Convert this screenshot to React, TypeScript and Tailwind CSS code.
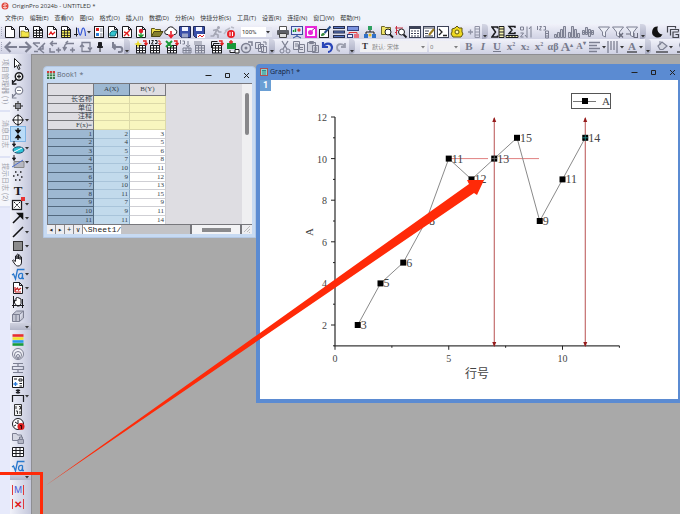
import type { ReactNode } from "react";

const GREY = "#7d8092";
const INK = "#1b1b1f";

const menus = [
  "文件(F)", "编辑(E)", "查看(V)", "图(G)", "格式(O)", "插入(I)", "数据(D)",
  "分析(A)", "快捷分析(S)", "工具(T)", "设置(R)", "连接(N)", "窗口(W)", "帮助(H)",
];

// worksheet data, A is plotted and B is used for the point labels
const rows = [
  [2, 3], [4, 5], [5, 6], [7, 8], [10, 11], [9, 12],
  [10, 13], [11, 15], [7, 9], [9, 11], [11, 14],
];

const page = <path d="M2.5 1.5h6l3 3v8h-9z M8.5 1.5v3h3" fill="#fff" stroke={INK} />;

function grid(fill: string, stroke: string) {
  return (
    <>
      <rect x="2.5" y="5.5" width="9" height="7" fill={fill} />
      <path d="M2 5.5h10M2 8h10M2 10.5h10M2 13h10M2.5 5v8M5.5 5v8M8.5 5v8M11.5 5v8" stroke={stroke} />
    </>
  );
}

const icons: Record<string, ReactNode> = {
  // standard bar
  "New project": page,
  "New folder": <>{page}<path d="M4 6h3l1 1h4v5H4z" fill="#f4e64a" stroke="#8a8020" strokeWidth=".7" /></>,
  "New workbook": <>{page}<path d="M2.5 5.5h9M2.5 8h9M2.5 10.5h9M5.5 4v8M8.5 4v8" stroke={INK} /></>,
  "New graph": <>{page}<path d="M4 10l2-3 1.500 2.500L10 7" fill="none" stroke="#e02020" strokeWidth="1.300" /></>,
  "New matrix": <>{page}<rect x="3" y="5" width="8" height="7" fill="#f4ec5a" /><path d="M2.500 5.500h9M2.500 8h9M2.500 10.500h9M5.500 4v8M8.500 4v8" stroke={INK} strokeWidth=".8" /></>,
  "New function plot": <><path d="M3.500 2.500v9M1 9.500h4" stroke={INK} /><path d="M5 3c2 12 3 6 4 2s3-2 3.500 6" fill="none" stroke="#3558d8" strokeWidth="1.200" /></>,
  "New report": <><rect x="2.500" y="1.500" width="9" height="11" fill="#fff" stroke={INK} /><rect x="4" y="3" width="3" height="3" fill="#e02020" /><rect x="4" y="8" width="3" height="3" fill="#2e7fd8" /><path d="M8 4h2.500M8 6h2.500M8 9h2.500M8 11h2.500" stroke={GREY} /></>,
  "New layout": <>{page}<path d="M4 8l2-2h5l-2 5H4z" fill="#35c5d0" stroke="#146a78" /></>,
  "New notes": <>{page}<path d="M4 11l6-6M4 7l3 1 2 3" stroke="#e02020" strokeWidth="1.400" fill="none" /></>,
  "New image": <>{page}<circle cx="7" cy="6" r="2.200" fill="#e02030" /><path d="M7 8v4M4.500 9.500L7 12l2.500-2.500" stroke="#18902c" strokeWidth="1.300" fill="none" /></>,
  Open: <><path d="M1.500 11.500v-8h3l1 1h5v2" fill="#efe04c" stroke="#5e5818" /><path d="M1.500 11.500l2.500-5h9l-3 5z" fill="#85802c" stroke="#4a4616" /></>,
  "Open from cloud": <><path d="M4 9.500H3a2.300 2.300 0 010-4.600 4 4 0 017.600-.6 2.700 2.700 0 01.4 5.200h-1" fill="#fff" stroke={INK} /><path d="M7 6v6M4.500 9.500L7 12.500l2.500-3" stroke="#e8202c" strokeWidth="1.600" fill="none" /></>,
  Save: <><path d="M1.500 1.500h11v11h-9l-2-2z" fill="#3a4fa8" stroke="#1e2858" /><rect x="4" y="2" width="6" height="4" fill="#f3f5ff" /><rect x="4" y="8.500" width="6" height="4" fill="#9aa4c8" /></>,
  "Save template": <><path d="M1.500 1.500h11v11h-9l-2-2z" fill="#3a4fa8" stroke="#1e2858" /><rect x="4" y="2" width="6" height="4" fill="#f3f5ff" /><path d="M5 9h8v4H5z" fill="#fff" /><path d="M6 12l2-2 2 2 2-2" stroke="#e02020" fill="none" /></>,
  Run: <><circle cx="9.500" cy="2.500" r="1.500" fill="#a5a7b5" /><path d="M4 5.500l4-1-2 4 3 1.500v3M6 8.500L4.500 11H1.500M8.500 5l1.500 2h2.500" stroke="#a5a7b5" strokeWidth="1.700" fill="none" /></>,
  Pause: <><path d="M2 6l5-3M1 9l3-4M8 2l3 1" stroke="#b9bbc6" strokeWidth="1.500" /><circle cx="8" cy="9" r="4" fill="#e8222a" /><path d="M7 7v4M9.500 7v4" stroke="#fff" /></>,
  Print: <><path d="M3.500 5V1.500h7V5" fill="#fff" stroke="#555" /><rect x="1" y="5" width="12" height="5" rx="1" fill="#5d5f66" /><path d="M3.500 8.500h7v4h-7z" fill="#ddd" stroke="#444" /></>,
  "Slide show": <><rect x="1.500" y="1.500" width="11" height="8" fill="#dfe9ff" stroke="#3c4e9c" /><path d="M3.500 7V5M5.500 7V3.500" stroke="#18902c" strokeWidth="1.400" /><circle cx="9" cy="5" r="1.700" fill="#e04040" /><path d="M7 9.500v2M3 13l4-2 4 2" stroke="#30509c" fill="none" /></>,
  "Active window": <><rect x="1" y="1" width="12" height="12" fill="#e828d8" /><rect x="3" y="3" width="8" height="8" fill="#fff" /><circle cx="6.500" cy="7.500" r="2.500" fill="#e828d8" /><path d="M8 5.500l3-2.500" stroke="#a010a0" /></>,
  Brush: <><rect x="1.500" y="4.500" width="9" height="8" fill="#fff" stroke={INK} /><path d="M12.500 1.500L6.500 8" stroke="#26508c" strokeWidth="2" /><path d="M3 11c0-3 2-3.500 3.500-2.500S5 11.500 3 11z" fill="#3a8c40" /></>,
  Rows: <><path d="M1 2.500h12M1 7h12M1 11.500h12" stroke="#29304e" strokeWidth="3" /><path d="M2 2.500h10M2 7h10M2 11.500h10" stroke="#5a78c8" /></>,
  Flow: <><rect x="1.500" y="1.500" width="11" height="4" fill="#7a92e0" stroke="#35427c" /><path d="M3 7.500h8M3 7.500v2M11 7.500v2" stroke="#e03838" /><rect x="1.500" y="9.500" width="5" height="3" fill="#eef" stroke="#35427c" /><rect x="8" y="9" width="5" height="4" fill="#e87080" /></>,
  Tree: <><path d="M7 4v3M3 10V7h8v3" stroke={INK} fill="none" /><rect x="5" y="1" width="4" height="4" fill="#2ea060" /><rect x="1" y="9" width="4" height="4" fill="#3070c8" /><rect x="9" y="9" width="4" height="4" fill="#3070c8" /><circle cx="7" cy="10" r="1.500" fill="#e8c020" /></>,
  "Find in folder": <><path d="M1.500 9.500v-8h3l1 1h5v7z" fill="#f0e468" stroke="#6c6628" /><circle cx="8" cy="7" r="3" fill="#fff" stroke={INK} /><path d="M10 9.500l3 3" stroke={INK} strokeWidth="1.800" /></>,
  "Find in graph": <><path d="M2.500 1v9M1 3h8M1 8l3-3" stroke="#c83040" /><circle cx="7.500" cy="7" r="3" fill="#fff" stroke={INK} /><path d="M9.500 9.500l3 3" stroke={INK} strokeWidth="1.800" /></>,
  Table: <><rect x="1.500" y="1.500" width="11" height="11" fill="#fff" stroke="#3c4257" /><path d="M2 3h10" stroke="#3c4257" strokeWidth="2" /><path d="M3 6h8M3 8.500h8M3 11h8" stroke="#3c4257" strokeDasharray="2 1" /></>,
  "Edit table": <><rect x="1.500" y="1.500" width="11" height="11" fill="#fff" stroke="#3c4257" /><path d="M2 3h10M3 6h4M3 8.500h3M3 11h8" stroke="#3c4257" /><path d="M12 4L7 10" stroke="#9c7c20" strokeWidth="2" /></>,
  Console: <><rect x="1.500" y="1.500" width="11" height="11" fill="#fff" stroke="#3c4257" /><path d="M3 4l3 3-3 3M7 10.500h4" stroke="#222" strokeWidth="1.300" fill="none" /></>,
  Apps: <><path d="M7 1l2 2h3v4l1 2-2 3H3L1 9l1-2V4l3-1z" fill="#eed820" stroke="#5c5410" /><circle cx="7" cy="7" r="2" fill="#fff8b0" stroke="#5c5410" /></>,
  "Add column": <><path d="M1 7h5M3.500 4.500v5" stroke="#8f92a4" strokeWidth="1.300" /><path d="M8 1.500h4.500v11H8zM8 4h4.500M8 7h4.500M8 10h4.500" stroke="#8f92a4" fill="none" /></>,
  "Column statistics": <><path d="M6.500 3.500V2H1l3.500 5L1 12h5.500v-1.500" stroke={INK} strokeWidth="1.500" fill="none" /><path d="M8 1.500h5v11H8zM8 4h5M8 7h5M8 10h5" stroke={INK} fill="#f4f0b0" /></>,
  "Row statistics": <><path d="M10 3V1.500H4L7 5 4 8.500h6V7" stroke={INK} strokeWidth="1.400" fill="none" /><path d="M1 10.500h12v2H1zM4 10v3M7 10v3M10 10v3" stroke={INK} fill="#f4f0b0" /></>,
  Sort: <path d="M1.500 2h3v3h-3zM1.500 8h3L1.500 12h3M8 1.500v11M6 10l2 2.500M12 12.500v-11M10 4l2-2.500" stroke={GREY} fill="none" />,
  "Set values": <path d="M1.500 1v4M3.500 1.500h2L3.500 5h2M7.500 1.500h2v3.500h-2M9.500 6v7h3V6zM9.500 8.500h3M9.500 11h3" stroke={GREY} fill="none" />,
  "Bars ascending": <path d="M1.500 9.500h2v3h-2zM4.500 7.500h2v5h-2zM7.500 4.500h2v8h-2zM10.500 1.500h2v11h-2z" stroke={GREY} fill="#c9cbd6" />,
  Bars: <path d="M1.500 7.500h2v5h-2zM4.500 1.500h2v11h-2zM7.500 4.500h2v8h-2zM10.500 8.500h2v4h-2z" stroke={GREY} fill="#c9cbd6" />,
  "Bars centred": <path d="M1.500 5.500h2v4h-2zM4.500 2.500h2v7h-2zM7.500 4.500h2v7h-2zM10.500 5.500h2v4h-2zM1 7.500h12" stroke={GREY} fill="#c9cbd6" />,
  Filter: <path d="M1.500 2h11L8.500 7v5l-3-1.500V7z" stroke={GREY} fill="#eceef6" />,
  "Clear filter": <><path d="M1.500 2h11L8.500 7v5l-3-1.500V7z" stroke={GREY} fill="#eceef6" /><path d="M8 8l4 4.500M12 8l-4 4.500" stroke="#6a6c7c" strokeWidth="1.300" /></>,
  "Reapply filter": <><path d="M1.500 2h11L8.500 7v5l-3-1.500V7z" stroke={GREY} fill="#eceef6" /><path d="M1 9h4M9 8v4.500h4M12.500 12V8" stroke="#6a6c7c" fill="none" /></>,
  Theme: <path d="M9 1.500a5.500 5.500 0 104.500 8A5.500 5.500 0 019 1.500z" fill="#111" />,
  Layers: <path d="M1.500 7.500v-6h8v2M4.500 10.500v-6h8v2M12.500 7H7v5.500h5.500v-3H9.500" stroke="#44464f" fill="none" strokeWidth="1.200" />,
  // edit bar
  Back: <path d="M6.500 2L1.500 7l5 5M2 7h11" stroke={GREY} strokeWidth="2.200" fill="none" />,
  Forward: <path d="M7.500 2l5 5-5 5M12 7H1" stroke={GREY} strokeWidth="2.200" fill="none" />,
  Recalculate: <path d="M1 3h7M1 3l5 4M13 3L6 10M2 11.500h4M7 9l5 4M11 5v4h-4" stroke={GREY} strokeWidth="1.500" fill="none" />,
  "Step back": <path d="M5 1L2.500 3.500 5 6M3 3.500h6M2 8v4h5M8 10h5M10.500 7.500v5" stroke={GREY} strokeWidth="1.500" fill="none" />,
  "Step forward": <path d="M12 3.500H6A3.500 3.500 0 002.500 7v2M4.500 7l-2 3-1.500-3M8 10h5M10.500 7.500v5M6 1L3.500 3.500" stroke={GREY} strokeWidth="1.500" fill="none" />,
  Refresh: <path d="M3 5V2.500h8V9M11 9v2.500H3V5M1 7l2-2.500L5 7M9 7.500l2 2.500 2-2.500" stroke={GREY} strokeWidth="1.300" fill="#e2e3ee" />,
  Pin: <path d="M5.500 2.500h3v4h1v1h-5v-1h1zM7 8v4" stroke={INK} fill={INK} />,
  Return: <path d="M3 2v5h7c3 0 3 5 0 5H8M5.500 4.500L3 7l2.500 2.500" stroke={GREY} strokeWidth="2" fill="none" />,
  "Book star": <>{grid("#fff", INK)}<path d="M4 0l1 3 3 1-3 1-1 3-1-3-3-1 3-1z" fill="#ecdc28" /><path d="M9 1h3v3M10.500 3L12 5l1.500-2" stroke="#e02020" strokeWidth="1.300" fill="none" /></>,
  "Import numbers": <>{grid("#fff", INK)}<path d="M1.500 0v4M3.500 .5h2L3.500 4h2M7 .5h2v3H7" stroke={INK} fill="none" /><path d="M10 1h2v3M10.500 3L12 5l1.500-2" stroke="#e02020" fill="none" /></>,
  "Import sheet": <>{grid("#fff", INK)}<path d="M1 1l6 6M7 1L1 7" stroke="#1c9a38" strokeWidth="2" /><path d="M9 1h3v3M10.500 3L12 5l1.500-2" stroke="#e02020" strokeWidth="1.300" fill="none" /></>,
  "Import again": <path d="M1.500 0v4M3.500 1h2v3h-2M9 1v6M7 5l2 2.500L11 5M4 8h8v5H4zM4 10.500h8M7 8v5M10 8v5" stroke={GREY} fill="none" />,
  "Clone import": <>{grid("#d9dae4", GREY)}<path d="M1 1h8v4H1z" fill="#b6b8c6" /></>,
  Batch: <><path d="M1.500 8V1.500h6M3.500 10V3.500h6" stroke={INK} fill="none" />{grid("#fff", INK)}<path d="M9 1h3v3M10.500 3L12 5l1.500-2" stroke="#e02020" strokeWidth="1.300" fill="none" /></>,
  "Connect data": <><rect x="1" y="3" width="9" height="6" fill="#18983a" /><path d="M5 0v4M3 2h4" stroke="#e02020" strokeWidth="1.300" /><path d="M4 10v2.500h5M9 9.500h4v3.500H9z" stroke={INK} fill="#fff" /></>,
  Recapture: <><circle cx="6" cy="8" r="4.500" stroke={GREY} fill="#d8dae6" strokeWidth="1.500" /><circle cx="6" cy="8" r="1.500" fill={GREY} /><path d="M8 2h4v4" stroke={GREY} fill="none" strokeWidth="1.500" /></>,
  Duplicate: <path d="M1.500 2.500h5v6h-5zM4.500 4.500h5v7h-5zM9 2h3v3M7.500 6.500h5v6h-5z" stroke={GREY} fill="#dfe0ea" />,
  Cut: <><path d="M4 1l5 8M10 1L5 9" stroke={GREY} strokeWidth="1.300" /><circle cx="4" cy="11" r="2" stroke={GREY} fill="none" /><circle cx="10" cy="11" r="2" stroke={GREY} fill="none" /></>,
  Copy: <path d="M1.500 1.500h6v8h-6zM6.500 4.500h6v8h-6zM3 4h3M3 6h3M8 7.500h3M8 9.500h3" stroke={GREY} fill="#dfe0ea" />,
  Paste: <path d="M1.500 2.500h8v9h-8zM3.500 1.500h4v2h-4zM6.500 5.500h6v7h-6zM8 8h3M8 10h3" stroke={GREY} fill="#d0d2de" />,
  Undo: <path d="M3 2v5h5M3 7c2-4 8-5 9 0 0 3-2 5-4 5" stroke="#2a46b8" strokeWidth="2.200" fill="none" />,
  Redo: <path d="M11 3v4H7M11 7C9 3 3 3 3 7.500c0 2 1 3.500 3 3.500" stroke="#9c9fae" strokeWidth="1.800" fill="none" />,
  Align: <path d="M1 2.500h11M1 5.500h8M1 8.500h11M1 11.500h8" stroke={GREY} strokeWidth="1.300" />,
  Spacing: <path d="M2 1v12M5 1v9M8 1v9M11 1v12" stroke={GREY} strokeWidth="1.300" />,
  Fill: <><path d="M3 6l4-4 5 4-4 3.500H5z" stroke={GREY} fill="#d6d8e2" strokeWidth="1.200" /><path d="M5 5V1" stroke={GREY} /><rect x="1" y="11" width="12" height="2" fill="#6f7078" /></>,
  "Line colour": <><circle cx="7" cy="5" r="3.500" stroke={GREY} fill="none" /><rect x="1" y="11" width="12" height="2" fill="#6f7078" /></>,
  // tools bar
  Pointer: <path d="M3.500 1.500v9l2.200-2 1.800 4 1.500-.7-1.800-3.800h3z" fill="#fff" stroke={INK} />,
  "Zoom in": <><circle cx="8" cy="5.500" r="3.700" stroke={INK} strokeWidth="1.500" fill="#fff" /><path d="M6 5.500h4M8 3.500v4M5.500 8L2 11.500M1.500 9v4h4" stroke={INK} strokeWidth="1.300" fill="none" /></>,
  "Zoom out": <><circle cx="8" cy="5.500" r="3.700" stroke={GREY} strokeWidth="1.200" fill="#fff" /><path d="M6 5.500h4M5.500 8L2 11.500M1.500 9v4h4" stroke={GREY} strokeWidth="1.200" fill="none" /></>,
  Reader: <><path d="M7 2v10M2 7h10" stroke={INK} /><rect x="4.500" y="4.500" width="5" height="5" fill="#8d8f98" stroke="#444" /></>,
  Target: <><circle cx="7" cy="7" r="4.500" stroke={INK} fill="#fff" /><path d="M7 1v12M1 7h12" stroke={INK} /></>,
  "Data cursor": <path d="M7 1v3M5 3.500h4L7 6zM7 13v-3M5 10.500h4L7 8z" fill="#111" stroke="#111" strokeWidth="1.300" />,
  "Select data": <><path d="M3 0v4M1.500 3L3 5.500 4.500 3z" stroke={INK} fill={INK} /><ellipse cx="7.500" cy="9" rx="5.500" ry="3.200" fill="#2cc4d8" stroke="#1c4a6c" /><path d="M3 11l8-4" stroke="#fff" /></>,
  "Mask data": <><path d="M3 0v4M1.500 3L3 5.500 4.500 3z" stroke={INK} fill={INK} /><path d="M3 6.500h10v6H3z" fill="#b7b8c2" stroke="#888" /><path d="M1 12l11-7" stroke="#4a6cd0" /></>,
  "Draw data": <path d="M4 3h1.500M9 3h1.500M2 7h1.500M10 8h1.500M4 11h1.500M8 11h1.500M6 6h1.500" stroke={INK} strokeWidth="1.300" />,
  Rescale: <><rect x="1.500" y="3.500" width="9" height="9" fill="#fff" stroke={INK} strokeWidth="1.300" /><path d="M3 5l6 6M9 5l-6 6" stroke={INK} strokeDasharray="2 1" /><rect x="10" y="0" width="4" height="4" fill="#e83030" /></>,
  Arrow: <path d="M2 12L10 4M7 2.500h4.500V7z" stroke="#111" strokeWidth="1.600" fill="#111" />,
  Line: <path d="M2 12L12 2" stroke="#111" strokeWidth="1.600" />,
  Rectangle: <rect x="2.500" y="2.500" width="9" height="9" fill="#8c8c8c" stroke="#333" />,
  Pan: <path d="M4.500 8V3a1 1 0 011.500 0v3-4.500a1 1 0 011.500 0V6 2.500a1 1 0 011.500 0V6.500v-2.500a1 1 0 011.500 0V9c0 3-1.500 4-3.500 4S4 11.500 1.500 7.500c.5-1 2-.5 3 1.500" fill="#fff" stroke={INK} />,
  Equation: <path d="M1 8l1.500-1L4.500 12 6.500 2.500h7M11.500 6.500c-5-1.500-5 6-1.500 5 1 0 1.500-2 1.500-5v5h1.500" stroke="#2878cc" strokeWidth="1.300" fill="none" />,
  "Insert graph": <>{page}<path d="M4 11V6M4 11h6M4.500 9l2-2 1 2L10 7" fill="none" stroke="#c82020" strokeWidth="1.200" /></>,
  "Pan page": <><path d="M3.500 8V5l1.500 1V3l1.500-.5L8 3l2 1v4.500L8.500 11H6z" fill="#fff" stroke={INK} /><path d="M1 10.500h12M2.500 1v12M11.500 4v9" stroke={INK} /></>,
  Rotate: <path d="M1.500 5.500h7v7h-7zM1.500 5.500l4-3.500h7l-4 3.500M12.500 2v7l-4 3.500M5 5.500v7" stroke={GREY} fill="#c4c6d2" />,
  "Colour scale": <><path d="M1.500 2.500h11" stroke="#e83030" strokeWidth="2.600" /><path d="M1.500 5.500h11" stroke="#f4e42c" strokeWidth="2.600" /><path d="M1.500 8.500h11" stroke="#2a98e8" strokeWidth="2.600" /><path d="M1.500 11.500h11" stroke="#1a9c3c" strokeWidth="2.600" /></>,
  "Bubble scale": <><circle cx="7" cy="7" r="5.500" stroke={GREY} fill="#f1f2f8" /><circle cx="7" cy="8" r="3.500" stroke={GREY} fill="none" /><circle cx="7" cy="9" r="1.500" stroke={GREY} fill="none" /></>,
  "Scale bar": <path d="M2 2.500h10M2 11.500h10M7 2v3M7 9v3M1.500 5.500h11v3h-11z" stroke={GREY} fill="none" strokeWidth="1.200" />,
  Legend: <><path d="M1.500 1.500h11v11h-11z" fill="#fff" stroke={INK} /><path d="M3 4h3M8 4h3V6H8zM8.500 8.500h2.500M8.500 11h2.500" stroke={INK} fill="none" /><path d="M4.500 7v4M2.500 9h4" stroke="#2878d8" strokeWidth="1.300" /></>,
  Bracket: <path d="M1.500 13V6.500h11V13M5 1l4 3M9 1L5 4M7 0v5" stroke={INK} fill="none" strokeWidth="1.200" />,
  "Axis table": <path d="M3.500 1.500h7v11h-7zM5 3v3M8 3.500h1.500V6H8M5 8h1.500v3M9 8v3" stroke="#333" fill="#f4f4f4" />,
  Clock: <><circle cx="7" cy="7" r="5.500" stroke={INK} fill="#fff" /><path d="M7 3v4L4 5M3 9l2-1" stroke={INK} fill="none" /><circle cx="10" cy="9.500" r="3.500" fill="#d82020" /><path d="M9 8.500h1.500V12" stroke="#300" fill="none" /></>,
  "Lock folder": <><path d="M1.500 9.500v-7h4l1 1.500h4v5.500z" stroke={GREY} fill="#d6d8e2" /><path d="M7 8.500h5.500v4H7zM8.500 8V6h3v2" stroke={GREY} fill="#b4b6c4" /></>,
  "Insert table": <path d="M1.500 2.500h11v9h-11zM1.500 5.500h11M1.500 8.500h11M5 2.500v9M9 2.500v9" stroke={INK} fill="#fff" />,
};

const text: Record<string, ReactNode> = {
  Text: <span className="font-bold text-[13px] text-[#1b1b1f]">T</span>,
  Bold: <b>B</b>,
  Italic: <i>I</i>,
  Underline: <u>U</u>,
  Superscript: <span>x<sup className="text-[6px] -top-1">2</sup></span>,
  Subscript: <span>x<sub className="text-[6px] bottom-0">2</sub></span>,
  "Super and subscript": <span>x<sup className="text-[6px] -top-1">2</sup></span>,
  Greek: <span className="text-[10px]">αβ</span>,
  "Larger font": <span className="text-[13px]">A<sup className="text-[6px] -top-1">▴</sup></span>,
  "Smaller font": <span className="text-[9px]">A<sup className="text-[6px] -top-1">▾</sup></span>,
  "Font colour": <span className="border-b-2 border-[#6f7078] px-px text-[11px] leading-[10px]">A</span>,
  "Marker M": <span className="border-x border-[#e03a3a] px-px text-[9px] leading-[10px] text-[#4a5cd4] font-sans font-normal">M</span>,
  "Marker X": <span className="border-x border-[#e03a3a] px-px text-[10px] leading-[10px] text-[#e01818] font-sans font-bold">✕</span>,
};

function Tool({ name, active }: { name: string; active?: boolean }) {
  return (
    <button
      aria-label={name}
      className={
        "flex h-[14px] w-[14px] shrink-0 items-center justify-center whitespace-nowrap font-['Liberation_Serif',serif] text-[11px] font-bold leading-none text-[#777a8c] " +
        (active ? "bg-[#b9dcf8] outline outline-[#7fb4e4]" : "")
      }
    >
      {icons[name] ? (
        <svg viewBox="0 0 14 14" className="h-[14px] w-[14px]" fill="none">{icons[name]}</svg>
      ) : (
        text[name]
      )}
    </button>
  );
}

function Group({ names, className = "" }: { names: string[]; className?: string }) {
  return (
    <div className={"flex shrink-0 " + className}>
      {names.map((n) => <Tool key={n} name={n} />)}
    </div>
  );
}

function Caret() {
  return (
    <svg viewBox="0 0 4 4" className="w-1 h-1 shrink-0"><path d="M0 1h4L2 3.500z" fill="#333" /></svg>
  );
}

// end cap of a toolbar
function Cap() {
  return (
    <div className="flex h-[15px] w-[6px] shrink-0 items-end justify-center rounded-r bg-linear-to-b from-[#d4d6e4] to-[#a9acc2] pb-px">
      <Caret />
    </div>
  );
}

function Grip() {
  return <div className="h-[9px] w-px shrink-0 border-l border-dotted border-[#a6a9bd]" />;
}

const sideTools: [string, boolean][] = [
  ["Pointer", false], ["Zoom in", false], ["Zoom out", false], ["Reader", false], ["Target", true],
  ["Data cursor", false], ["Select data", true], ["Mask data", true], ["Draw data", false], ["Text", false],
  ["Rescale", true], ["Arrow", true], ["Line", true], ["Rectangle", true], ["Pan", false],
  ["Equation", true], ["Insert graph", true], ["Pan page", false], ["Rotate", false],
];

const objectTools: [string, boolean][] = [
  ["Colour scale", false], ["Bubble scale", false], ["Scale bar", false], ["Legend", false], ["Bracket", true],
  ["Axis table", false], ["Clock", false], ["Lock folder", false], ["Insert table", false], ["Equation", false],
];

function SideGroup({ tools, last }: { tools: [string, boolean][]; last?: boolean }) {
  return (
    <div className="pt-[3px]">
      {tools.map(([name, menu]) => (
        <div key={name} className="flex items-center">
          <Tool name={name} active={name === "Data cursor"} />
          {menu && <Caret />}
        </div>
      ))}
      {!last && (
        <div className="-ml-px flex h-[7px] items-center justify-end bg-linear-to-b from-[#d0d2e0] to-[#b3b6c8] pr-[2px]">
          <Caret />
        </div>
      )}
    </div>
  );
}

function WindowButtons() {
  return (
    <div className="flex items-center gap-[12px]">
      <button aria-label="Minimize"><svg viewBox="0 0 7 7" className="h-[7px] w-[7px]"><path d="M.5 3.500h6" stroke="#222" /></svg></button>
      <button aria-label="Maximize"><svg viewBox="0 0 7 7" className="h-[7px] w-[7px]"><path d="M1.500 1.500h4v4h-4z" stroke="#222" fill="none" /></svg></button>
      <button aria-label="Close"><svg viewBox="0 0 7 7" className="h-[7px] w-[7px]"><path d="M1 1l5 5M6 1L1 6" stroke="#222" /></svg></button>
    </div>
  );
}

function Workbook() {
  const head = "border-r border-b border-[#77777c] bg-[#dedde2] p-0 font-normal";
  const idx = "border-r border-b border-[#52697f] bg-[#9db8d2] p-0 pr-px text-right font-normal";
  return (
    <section className="absolute left-[11px] top-[11px] flex h-[172px] w-[213px] flex-col rounded-t border border-[#b4c8e4] bg-[#c7daf2] px-[3px] pb-[3px]">
      <header className="flex h-[16px] shrink-0 items-center justify-between pr-[2px]">
        <div className="flex items-center gap-[2px]">
          <svg viewBox="0 0 8 8" className="h-2 w-2">
            <rect width="8" height="8" fill="#3c7c50" />
            <path d="M0 1h8" stroke="#d03c3c" strokeWidth="2" />
            <path d="M0 3h8M0 5.500h8M2.500 0v8M5.500 0v8" stroke="#d8f0dc" strokeWidth=".7" />
          </svg>
          <h2 className="font-['Open_Sans',sans-serif] text-[7px] text-[#5c6573]">Book1 *</h2>
        </div>
        <WindowButtons />
      </header>
      <div className="flex min-h-0 flex-1 overflow-hidden border-l border-t border-[#77777c] bg-[#dedde2]">
        <div className="flex-1 overflow-hidden">
          <table className="w-[118px] table-fixed border-separate border-spacing-0 font-['Liberation_Serif','Noto_Sans_CJK_SC',serif] text-[7px] leading-[7px] text-[#333d49]">
            <thead>
              <tr className="h-[12px]">
                <th className={head + " w-[46px]"}></th>
                <th className="w-[36px] border-b border-r border-[#52697f] bg-[#9db8d2] p-0 font-normal">A(X)</th>
                <th className={head + " w-[36px]"}>B(Y)</th>
              </tr>
            </thead>
            <tbody>
              {["长名称", "单位", "注释", "F(x)="].map((label, i) => (
                <tr key={label} className={i % 2 ? "h-[9px]" : "h-[8px]"}>
                  <th className={head + " pr-px text-right"}>{label}</th>
                  <td className="border-b border-r border-[#dcd9a8] bg-[#f8f6bf] p-0"></td>
                  <td className="border-b border-r border-[#dcd9a8] bg-[#f8f6bf] p-0"></td>
                </tr>
              ))}
              {rows.map(([a, b], i) => (
                <tr key={i} className={i % 5 === 1 || i % 5 === 3 ? "h-[8px]" : "h-[9px]"}>
                  <th className={idx}>{i + 1}</th>
                  <td className="border-b border-r border-b-[#a9c4da] border-r-[#88aac6] bg-[#c2daec] p-0 pr-px text-right">{a}</td>
                  <td className="border-b border-r border-[#cfcfd4] bg-white p-0 pr-px text-right">{b}</td>
                </tr>
              ))}
            </tbody>
          </table>
        </div>
        <div className="flex w-[10px] justify-center bg-[#efeff1] pt-[9px]">
          <div className="h-[42px] w-[4px] rounded bg-[#87878a]" />
        </div>
      </div>
      <footer className="flex h-[10px] shrink-0 items-stretch border-t border-[#77777c] bg-[#c3c3c6] font-['Liberation_Mono',monospace] text-[8px] leading-[9px] text-[#222]">
        {["◂", "▸", "+", "∨"].map((s) => (
          <button key={s} className="w-[9px] border-r border-[#8c8c90] bg-[#ededf0] text-center text-[7px] leading-[8px]">{s}</button>
        ))}
        <button className="bg-white">\Sheet1/</button>
        <div className="flex-1" />
        <div className="flex w-[52px] items-center justify-center border-x-2 border-[#77777c] bg-[#f3f3f5]">
          <div className="h-[4px] w-[29px] bg-[#8a8a8d]" />
        </div>
        <div className="w-[10px] bg-[#ededf0]">
          <svg viewBox="0 0 10 9" className="h-[9px] w-[10px]"><path d="M8 4L5 7M8 7l-1 1M8 1L2 7" stroke="#bbb" /></svg>
        </div>
      </footer>
    </section>
  );
}

function Plot() {
  const px = (v: number) => 75 + v * 22.75;
  const py = (v: number) => 37 + (12 - v) * 20.8;
  const line = rows.map(([a], i) => `${px(i + 1)},${py(a)}`).join(" ");
  return (
    <svg viewBox="0 0 418 319" className="w-full h-full font-['Liberation_Serif','Noto_Sans_CJK_SC',serif]" fill="#444">
      <path d={`M${px(0)} ${py(12)}V${py(1)}H${px(12.5)}`} fill="none" stroke="#3a3a3a" strokeWidth="1.300" />
      {[12, 11, 10, 9, 8, 7, 6, 5, 4, 3, 2, 1].map((v) => (
        <path key={v} d={`M${px(0)} ${py(v)}h${v % 2 ? -2 : -4}`} stroke="#222" />
      ))}
      {[2, 4, 6, 8, 10, 12].map((v) => (
        <text key={v} x="67" y={py(v) + 4} fontSize="10" textAnchor="end">{v}</text>
      ))}
      {[0, 2.5, 5, 7.5, 10, 12.5].map((v) => (
        <path key={v} d={`M${px(v)} ${py(1)}v${v % 5 ? 2 : 4}`} stroke="#222" />
      ))}
      {[0, 5, 10].map((v) => (
        <text key={v} x={px(v)} y="282" fontSize="10" textAnchor="middle">{v}</text>
      ))}
      <text x="217" y="298" fontSize="12" textAnchor="middle">行号</text>
      <text transform="translate(53 152) rotate(-90)" fontSize="11" textAnchor="middle">A</text>

      {/* cursors */}
      <path d={`M${px(5)} ${py(10)}H228M240 ${py(10)}H279`} stroke="#e08080" />
      {[7, 11].map((v) => (
        <g key={v} transform={`translate(${px(v)} 0)`}>
          <path d="M0 38V266" stroke="#b85050" />
          <path d="M0 37l2 5h-4zM0 267l2-5h-4z" fill="#951c1c" />
        </g>
      ))}
      <polyline points={line} fill="none" stroke="#8a8a8a" />
      {rows.map(([a, b], i) => (
        <g key={i} transform={`translate(${px(i + 1)} ${py(a)})`}>
          <rect x="-3" y="-3" width="6" height="6" fill="#000" />
          <text x="3" y="4" fontSize="12">{b}</text>
        </g>
      ))}
      <path d={`M${px(7)} ${py(10) - 3}v6M${px(7) - 3} ${py(10)}h6`} stroke="#777" strokeWidth=".8" />
      <path d={`M${px(11)} ${py(11) - 3}v6M${px(11) - 3} ${py(11)}h6`} stroke="#2a9a9a" strokeWidth=".8" />

      <rect x="311.500" y="13.500" width="39" height="15" fill="#fff" stroke="#555" />
      <path d="M313 21.500h23" stroke="#777" />
      <rect x="322" y="18" width="6" height="6" fill="#000" />
      <text x="342" y="25" fontSize="11">A</text>
    </svg>
  );
}

function GraphWindow() {
  return (
    <section className="absolute left-[224px] right-0 top-[9px] flex h-[339px] flex-col rounded-tl border-b-4 border-l-4 border-r-2 border-[#5b8bd2] bg-[#5b8bd2]">
      <header className="flex h-[16px] shrink-0 items-center justify-between pr-[2px]">
        <div className="flex items-center gap-[2px]">
          <svg viewBox="0 0 8 8" className="w-2 h-2">
            <rect x=".5" y=".5" width="7" height="7" fill="#8fd8d0" stroke="#b05050" />
            <path d="M2 2.500h4M2 4h4M2 6h4" stroke="#147a80" strokeWidth=".8" />
          </svg>
          <h2 className="font-['Open_Sans',sans-serif] text-[7px] text-[#14233c]">Graph1 *</h2>
        </div>
        <WindowButtons />
      </header>
      <div className="relative min-h-0 flex-1 bg-white">
        <Plot />
        <span className="absolute left-0 top-0 h-[11px] w-[11px] bg-[#6a9fd4] text-center text-[9px] font-bold leading-[11px] text-white">1</span>
      </div>
    </section>
  );
}

export default function App() {
  const bar = "flex h-[15px] items-center overflow-hidden bg-linear-to-b from-[#f1f2fa] to-[#cfd1e3]";
  return (
    <div className="relative flex h-screen flex-col overflow-hidden bg-[#eff3fa] font-['Roboto','Noto_Sans_CJK_SC',sans-serif] text-[#333]">
      <header className="flex h-[12px] shrink-0 items-center gap-[3px] pl-px">
        <svg viewBox="0 0 8 8" className="h-2 w-2"><circle cx="4" cy="4" r="3.500" fill="#e04a40" /><path d="M2 3.500l4-1M2 5.500h4M4 1v6" stroke="#fbd8d4" strokeWidth=".8" /></svg>
        <h1 className="font-['Open_Sans',sans-serif] text-[6px] leading-none">OriginPro 2024b - UNTITLED *</h1>
      </header>
      <nav className="flex h-[12px] shrink-0 items-center gap-[6px] pl-[5px] font-['Open_Sans','Noto_Sans_CJK_SC',sans-serif] text-[6px]">
        {menus.map((m) => <button key={m} className="whitespace-nowrap leading-none">{m}</button>)}
      </nav>

      <div className="shrink-0">
        <div className={bar + " pl-px"}>
          <Grip />
          <Group className="ml-px" names={["New project", "New folder", "New workbook", "New graph", "New matrix", "New function plot"]} />
          <Caret />
          <Group className="ml-px" names={["New report", "New layout", "New notes", "New image"]} />
          <Group className="ml-[2px]" names={["Open", "Open from cloud", "Save", "Save template"]} />
          <Group className="ml-[3px]" names={["Run", "Pause"]} />
          <div className="relative ml-[4px] flex w-[31px] shrink-0 items-center bg-white">
            <select aria-label="Zoom" className="h-[10px] w-full appearance-none pl-px text-[6px] leading-[10px]"><option>100%</option></select>
            <span className="pointer-events-none absolute inset-y-0 right-0 flex w-[6px] items-center bg-[#e4e6f1]"><Caret /></span>
          </div>
          <Group className="ml-[4px]" names={["Print", "Slide show", "Active window", "Brush", "Rows", "Flow"]} />
          <Group className="ml-[3px]" names={["Tree"]} />
          <Group className="ml-[3px]" names={["Find in folder", "Find in graph", "Table", "Edit table", "Console", "Apps"]} />
          <Group className="ml-[3px] mr-px" names={["Add column"]} />
          <Cap />
          <Group className="ml-[3px]" names={["Column statistics", "Row statistics", "Sort"]} />
          <Group className="ml-[3px]" names={["Set values"]} />
          <Group className="ml-[3px]" names={["Bars ascending", "Bars", "Bars centred"]} />
          <Group className="ml-[2px] mr-px" names={["Filter", "Clear filter", "Reapply filter"]} />
          <Cap />
          <Group className="ml-[3px]" names={["Theme"]} />
          <Group className="ml-[3px]" names={["Layers"]} />
        </div>

        <div className={bar + " pl-px"}>
          <Grip />
          <Group className="ml-[2px]" names={["Back", "Forward", "Recalculate"]} />
          <Group className="ml-[2px]" names={["Step back", "Step forward"]} />
          <Group className="ml-[3px]" names={["Refresh", "Pin"]} />
          <Group className="ml-[3px]" names={["Return"]} />
          <Cap />
          <Group className="ml-[4px]" names={["Book star", "Import numbers"]} />
          <Group className="ml-[3px]" names={["Import sheet", "Import again", "Clone import"]} />
          <Group className="ml-[3px]" names={["Batch"]} />
          <Group className="ml-[2px] mr-px" names={["Connect data", "Recapture", "Duplicate"]} />
          <Cap />
          <Group className="ml-[3px] mr-px" names={["Cut", "Copy", "Paste", "Undo", "Redo"]} />
          <Cap />
          <div className="relative ml-[5px] flex w-[67px] shrink-0 items-center bg-[#f0f0f3]">
            <span className="pointer-events-none absolute left-[2px] font-['Liberation_Serif',serif] text-[9px] font-bold leading-none">T</span>
            <select aria-label="Font" className="h-[11px] w-full appearance-none pl-[12px] text-[6px] leading-[11px] text-[#888]"><option>默认: 宋体</option></select>
            <span className="pointer-events-none absolute right-[2px] opacity-60"><Caret /></span>
          </div>
          <div className="relative ml-[2px] flex w-[31px] shrink-0 items-center bg-[#f0f0f3]">
            <select aria-label="Font size" className="h-[11px] w-full appearance-none pl-px text-[6px] leading-[11px] text-[#888]"><option>0</option></select>
            <span className="pointer-events-none absolute right-[2px] opacity-60"><Caret /></span>
          </div>
          <Group className="ml-[2px]" names={["Bold", "Italic", "Underline", "Superscript", "Subscript", "Super and subscript", "Greek", "Larger font", "Smaller font", "Align"]} />
          <Caret />
          <Group names={["Spacing"]} />
          <Caret />
          <Group className="ml-px" names={["Font colour"]} />
          <Caret />
          <div className="w-[2px] shrink-0" />
          <Cap />
          <Group className="ml-[4px]" names={["Fill"]} />
          <Caret />
          <Group className="ml-[3px]" names={["Line colour"]} />
        </div>
      </div>

      <div className="flex min-h-0 flex-1">
        <aside className="w-[10px] shrink-0 bg-[#e7eafb] text-[7px] leading-[10px] text-[#9c9eaa]">
          <button className="block h-[58px] w-[10px] border-b-2 border-[#dfe3f5] bg-[#f5f6fb] [text-orientation:sideways] [writing-mode:vertical-rl]">项目管理器 (1)</button>
          <button className="block h-[46px] w-[10px] border-b-2 border-[#dfe3f5] bg-[#f5f6fb] [text-orientation:sideways] [writing-mode:vertical-rl]">消息日志</button>
          <button className="block h-[50px] w-[10px] border-b-2 border-[#dfe3f5] bg-[#f5f6fb] [text-orientation:sideways] [writing-mode:vertical-rl]">提示日志 (2)</button>
        </aside>
        <div className="w-[21px] shrink-0 bg-linear-to-r from-[#f1f2fa] to-[#c4c7db] pl-px">
          <SideGroup tools={sideTools} />
          <SideGroup tools={objectTools} />
          <SideGroup tools={[["Marker M", false], ["Marker X", false]]} last />
        </div>
        <main className="relative flex-1 overflow-hidden border-l border-t border-[#8e8e92] bg-[#a9a9a9]">
          <Workbook />
          <GraphWindow />
        </main>
      </div>

      {/* red callout */}
      <div className="pointer-events-none absolute bottom-0 left-0 h-[42px] w-[43px] border-r-[3px] border-t-[3px] border-[#ff2a08]" />
      <svg viewBox="0 0 440 308" className="pointer-events-none absolute left-[45px] top-[179px] h-[308px] w-[440px]">
        <path d="M0 307L424 5l-2-4h17l-7 15-3-2z" fill="#ff2a08" />
      </svg>
    </div>
  );
}
